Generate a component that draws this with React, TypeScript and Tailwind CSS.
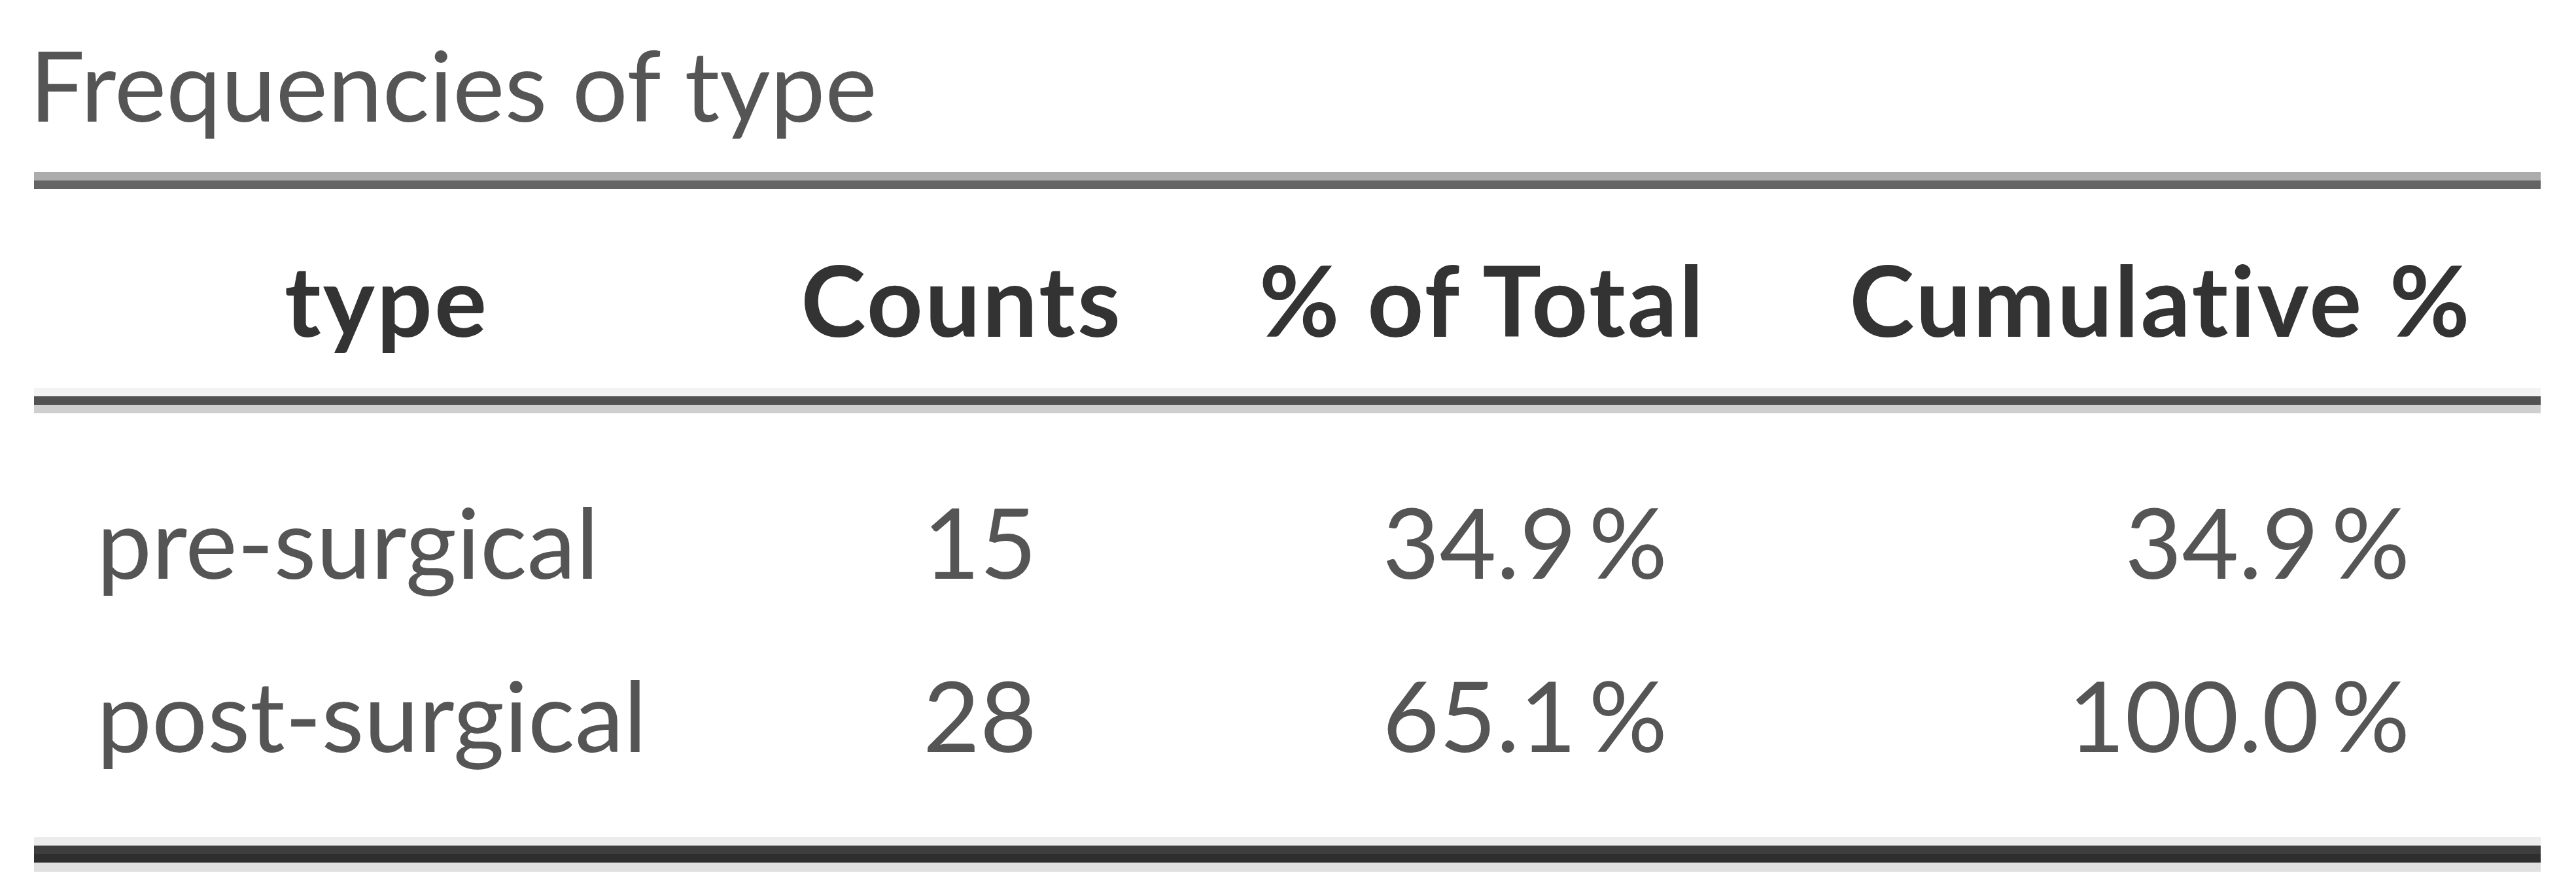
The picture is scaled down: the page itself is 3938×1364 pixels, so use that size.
import React from "react";

const rows = [
  { type: "pre-surgical", counts: "15", pct: "34.9\u2009%", cum: "34.9\u2009%" },
  { type: "post-surgical", counts: "28", pct: "65.1\u2009%", cum: "100.0\u2009%" },
];

export default function App() {
  return (
    <div className="min-h-screen w-full bg-white font-['Lato',sans-serif] text-[150px] leading-[180px] text-[#555] [font-variant-ligatures:none]">
      <div className="pt-[38px] pl-[45px] h-[215px] whitespace-nowrap">Frequencies of type</div>

      <div className="ml-[52px] w-[3832px] mt-[48px]">
        {/* top rule */}
        <div className="h-0 border-t-[13px] border-t-[#acacac] border-b-[13px] border-b-[#646464]" />

        {/* header */}
        <div className="grid grid-cols-[1078px_680px_912px_1162px] pt-[78px] pb-[46px] font-bold text-[#333] tracking-[3px] whitespace-nowrap">
          <div className="text-center">type</div>
          <div className="text-center">Counts</div>
          <div className="text-center">% of Total</div>
          <div className="text-center">Cumulative %</div>
        </div>

        {/* header rule */}
        <div className="h-[13px] bg-[#525252] border-t-[13px] border-t-[#f3f3f3] border-b-[13px] border-b-[#cfcfcf] box-content" />

        {/* body */}
        <div className="pt-[63px] pb-[55px]">
          {rows.map((r) => (
            <div
              key={r.type}
              className="grid grid-cols-[1078px_680px_912px_1162px] h-[265px] leading-[265px] whitespace-nowrap"
            >
              <div className="pl-[96px] text-left">{r.type}</div>
              <div className="pr-[225px] text-right">{r.counts}</div>
              <div className="pr-[173px] text-right">{r.pct}</div>
              <div className="pr-[200px] text-right">{r.cum}</div>
            </div>
          ))}
        </div>

        {/* bottom rule */}
        <div className="h-0 border-t-[13px] border-t-[#ececec] box-content">
          <div className="h-[13px] bg-[#3d3d3d]" />
          <div className="h-[13px] bg-[#2e2e2e]" />
          <div className="h-[14px] bg-[#e0e0e0]" />
        </div>
      </div>
    </div>
  );
}
